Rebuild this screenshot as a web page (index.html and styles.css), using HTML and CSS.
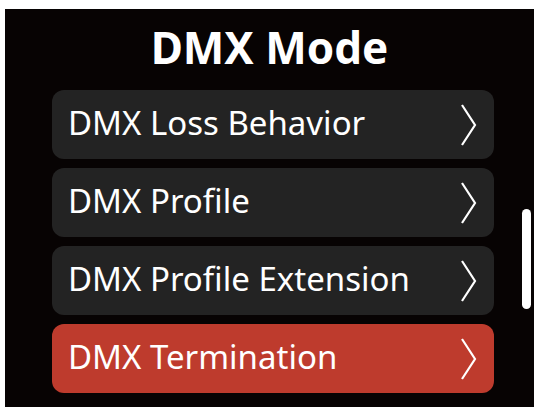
FILE: index.html
```html
<!DOCTYPE html>
<html lang="en">
<head>
    <meta charset="UTF-8">
    <meta name="viewport" content="width=device-width, initial-scale=1.0">
    <title>DMX Mode</title>
    <link rel="stylesheet" href="styles.css">
</head>
<body>

<div class="screen">
    <h1>DMX Mode</h1>
    <ul class="menu">
        <li>
            <span>DMX Loss Behavior</span>
            <svg class="chevron" viewBox="0 0 16 42"><polyline points="1,1 14,21 1,41"/></svg>
        </li>
        <li>
            <span>DMX Profile</span>
            <svg class="chevron" viewBox="0 0 16 42"><polyline points="1,1 14,21 1,41"/></svg>
        </li>
        <li>
            <span>DMX Profile Extension</span>
            <svg class="chevron" viewBox="0 0 16 42"><polyline points="1,1 14,21 1,41"/></svg>
        </li>
        <li class="active">
            <span>DMX Termination</span>
            <svg class="chevron" viewBox="0 0 16 42"><polyline points="1,1 14,21 1,41"/></svg>
        </li>
    </ul>
    <div class="scrollbar"></div>
</div>

</body>
</html>
```

FILE: styles.css
```css
body {
    margin: 0;
    background-color: #ffffff;
    font-family: "Noto Sans", sans-serif;
}
.screen {
    position: relative;
    background-color: #070303;
    color: #ffffff;
    margin: 9px 1px 0 5px;
    height: 398px;
    box-sizing: border-box;
}
h1 {
    margin: 0;
    height: 81px;
    line-height: 76px;
    text-align: center;
    font-size: 44px;
    font-weight: 700;
}
.menu {
    list-style-type: none;
    margin: 0;
    padding: 0 0 0 47px;
    width: 442px;
    display: flex;
    flex-direction: column;
    gap: 9px;
}
.menu li {
    background-color: #232323;
    height: 69px;
    border-radius: 12px;
    padding: 0 17px 0 16px;
    display: flex;
    justify-content: space-between;
    align-items: center;
    font-size: 33px;
}
.menu li span {
    margin-top: -5px;
}
.menu li.active {
    background-color: #be3b2d;
}
.chevron {
    width: 16px;
    height: 42px;
    fill: none;
    stroke: #ffffff;
    stroke-width: 2.2;
}
.scrollbar {
    position: absolute;
    left: 517px;
    top: 200px;
    width: 9px;
    height: 100px;
    border-radius: 5px;
    background-color: #ffffff;
}
```
